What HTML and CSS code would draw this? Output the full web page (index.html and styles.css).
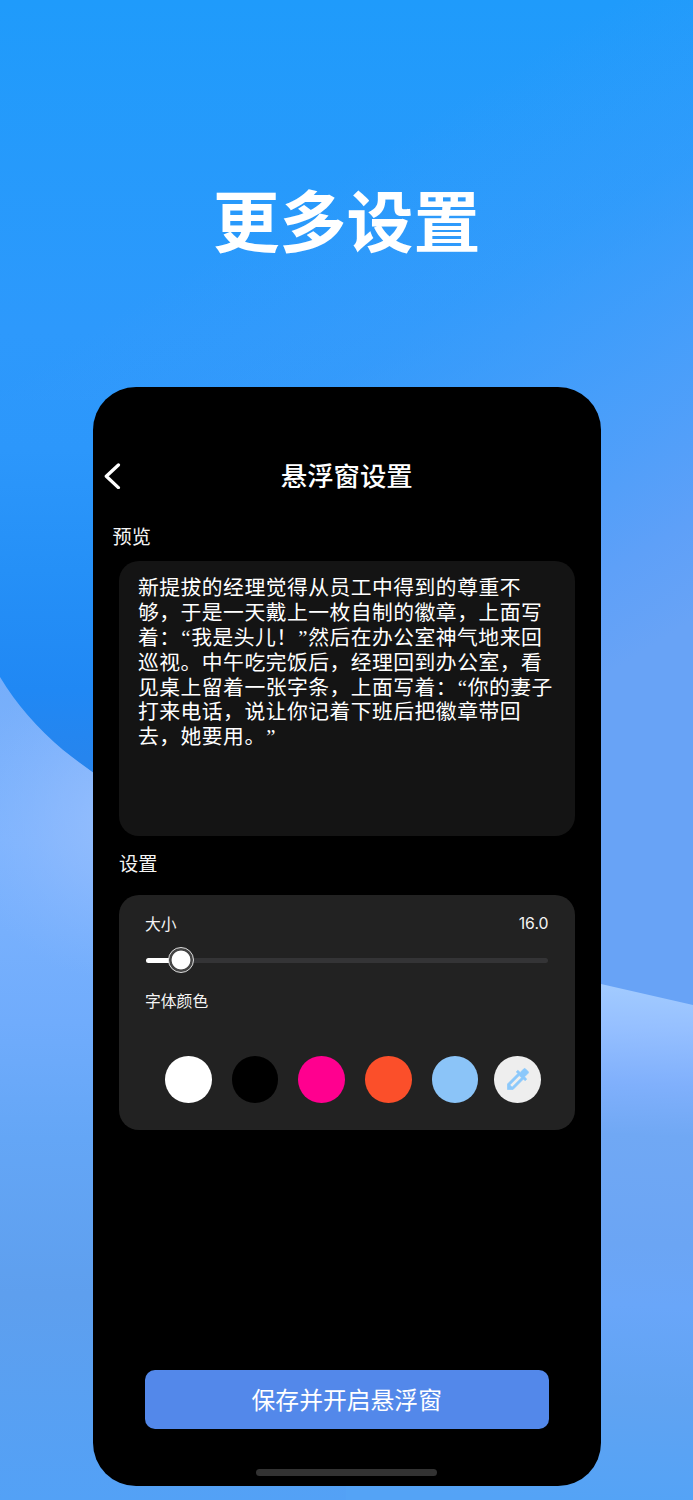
FILE: index.html
```html
<!DOCTYPE html>
<html lang="zh-CN">
<head>
<meta charset="utf-8">
<title>更多设置</title>
<link rel="stylesheet" href="styles.css">
</head>
<body>
<main class="poster">
  <svg class="backdrop" viewBox="0 0 693 1500" aria-hidden="true">
    <defs>
      <linearGradient id="sky" x1="0" y1="0" x2="0" y2="1">
        <stop offset="0" stop-color="#1f9bfb"/>
        <stop offset=".22" stop-color="#2d99fc"/>
        <stop offset=".3" stop-color="#2c97fb"/>
        <stop offset=".38" stop-color="#2590f7"/>
        <stop offset=".46" stop-color="#2088f4"/>
        <stop offset=".52" stop-color="#2884ec"/>
      </linearGradient>
      <linearGradient id="haze" gradientUnits="userSpaceOnUse" x1="330" y1="180" x2="630" y2="660">
        <stop offset="0" stop-color="#4a9ff9" stop-opacity="0"/>
        <stop offset=".3" stop-color="#459ffa" stop-opacity=".3"/>
        <stop offset=".6" stop-color="#4c9ffa" stop-opacity=".9"/>
        <stop offset=".85" stop-color="#5ea0f8"/>
        <stop offset="1" stop-color="#68a3f6"/>
      </linearGradient>
      <linearGradient id="waveLeft" gradientUnits="userSpaceOnUse" x1="0" y1="677" x2="0" y2="1500">
        <stop offset="0" stop-color="#76aefa"/>
        <stop offset=".2" stop-color="#7eb4fe"/>
        <stop offset=".42" stop-color="#70acfc"/>
        <stop offset=".56" stop-color="#64a6f6"/>
        <stop offset=".75" stop-color="#5e9fee"/>
        <stop offset="1" stop-color="#53a1f6"/>
      </linearGradient>
      <radialGradient id="glow" gradientUnits="userSpaceOnUse" cx="120" cy="820" r="160">
        <stop offset="0" stop-color="#94befd"/>
        <stop offset=".4" stop-color="#90bbfd" stop-opacity=".65"/>
        <stop offset="1" stop-color="#86b6fe" stop-opacity="0"/>
      </radialGradient>
      <linearGradient id="waveRight" gradientUnits="userSpaceOnUse" x1="610" y1="984" x2="590" y2="1500">
        <stop offset="0" stop-color="#a2cbff"/>
        <stop offset=".08" stop-color="#96c0ff"/>
        <stop offset=".19" stop-color="#80b0fc"/>
        <stop offset=".29" stop-color="#70a8f4"/>
        <stop offset=".5" stop-color="#6ba5f4"/>
        <stop offset=".62" stop-color="#69a6f9"/>
        <stop offset=".8" stop-color="#60a3f2"/>
        <stop offset="1" stop-color="#54a3f6"/>
      </linearGradient>
    </defs>
    <rect width="693" height="1500" fill="url(#sky)"/>
    <path d="M0 0H693V1100H350V400H0Z" fill="url(#haze)"/>
    <path d="M0 677Q24 717 63 750Q190 850 346 900V1500H0Z" fill="url(#waveLeft)"/>
    <path d="M0 677Q24 717 63 750Q190 850 346 900V1500H0Z" fill="url(#glow)"/>
    <path d="M346 935L601 984L693 1005V1500H346Z" fill="url(#waveRight)"/>
  </svg>

  <h1 class="headline">更多设置</h1>

  <section class="phone">
    <header class="navbar">
      <svg class="back" viewBox="0 0 18 28"><path d="M14.4 4L2.3 15.3L14.4 26.6"/></svg>
      <h2 class="nav-title">悬浮窗设置</h2>
    </header>

    <div class="label label-preview">预览</div>
    <div class="card preview">
      <p>新提拔的经理觉得从员工中得到的尊重不</p>
      <p>够，于是一天戴上一枚自制的徽章，上面写</p>
      <p>着：<q>“</q>我是头儿！<q>”</q>然后在办公室神气地来回</p>
      <p>巡视。中午吃完饭后，经理回到办公室，看</p>
      <p>见桌上留着一张字条，上面写着：<q>“</q>你的妻子</p>
      <p>打来电话，说让你记着下班后把徽章带回</p>
      <p>去，她要用。<q>”</q></p>
    </div>

    <div class="label label-settings">设置</div>
    <div class="card settings">
      <div class="row"><span>大小</span><span class="value">16.0</span></div>
      <div class="slider"><span class="fill"></span><span class="thumb"></span></div>
      <div class="row">字体颜色</div>
      <div class="swatches">
        <span class="swatch white"></span>
        <span class="swatch black"></span>
        <span class="swatch pink"></span>
        <span class="swatch orange"></span>
        <span class="swatch sky"></span>
        <span class="swatch picker">
          <svg viewBox="0 0 24 24"><path d="M20.71 5.63l-2.34-2.34c-.39-.39-1.02-.39-1.41 0l-3.12 3.12-1.93-1.91-1.41 1.41 1.42 1.42L3 16.25V21h4.75l8.92-8.92 1.42 1.42 1.41-1.41-1.92-1.92 3.12-3.12c.4-.4.4-1.03.01-1.42zM6.92 19L5 17.08l8.06-8.06 1.92 1.92L6.92 19z"/></svg>
        </span>
      </div>
    </div>

    <button class="save">保存并开启悬浮窗</button>
    <div class="home-bar"></div>
  </section>
</main>
</body>
</html>
```

FILE: styles.css
```css
* { box-sizing: border-box; }
body {
  margin: 0;
  font-family: "Noto Sans CJK SC", sans-serif;
  color: #fff;
}
.poster {
  position: relative;
  width: 693px;
  height: 1500px;
  padding-top: 168px;
  overflow: hidden;
}
.backdrop {
  position: absolute;
  inset: 0;
  width: 693px;
  height: 1500px;
  z-index: -1;
}
.headline {
  margin: 0 0 119px;
  height: 100px;
  line-height: 100px;
  font-size: 66.9px;
  font-weight: 700;
  text-align: center;
}
.phone {
  display: flex;
  flex-direction: column;
  width: 507.5px;
  height: 1099px;
  margin-left: 93px;
  padding: 68px 26px 0;
  border-radius: 43px;
  background: #000;
}
.navbar {
  display: grid;
  grid-template-columns: 18px 1fr 18px;
  align-items: center;
  height: 40px;
  margin: 0 -15px;
}
.back { width: 18px; height: 28px; }
.back path {
  fill: none;
  stroke: #fff;
  stroke-width: 3.3;
  stroke-linecap: round;
  stroke-linejoin: round;
}
.nav-title {
  margin: 0;
  font-size: 26.4px;
  font-weight: 500;
  line-height: 40px;
  text-align: center;
}
.label {
  height: 30px;
  line-height: 30px;
  font-size: 19.2px;
  color: #f4f4f4;
}
.label-preview { margin: 26px 0 10px -6.5px; }
.label-settings { margin: 12px 0 17px; }
.card { width: 455.5px; border-radius: 20px; }
.preview {
  height: 275px;
  padding: 13px 0 0 19px;
  background: #141414;
}
.preview p {
  margin: 0;
  height: 24.9px;
  line-height: 24.9px;
  font-size: 20.8px;
  letter-spacing: .48px;
  white-space: nowrap;
  text-spacing-trim: space-all;
}
.preview q {
  display: inline-block;
  width: 10.6px;
  line-height: 20px;
  font-family: "Liberation Serif", serif;
  letter-spacing: 0;
  text-align: center;
  quotes: none;
}
.settings {
  height: 235px;
  padding: 16px 26px 0;
  background: #222;
}
.row {
  display: flex;
  justify-content: space-between;
  height: 26px;
  line-height: 26px;
  font-size: 15.8px;
  color: #f4f4f4;
}
.value { font-family: Inter, sans-serif; }
.slider {
  position: relative;
  height: 5px;
  margin: 21px 1px 25px;
  border-radius: 3px;
  background: #343436;
}
.fill {
  display: block;
  width: 35px;
  height: 5px;
  border-radius: 3px;
  background: #fff;
}
.thumb {
  position: absolute;
  left: 22px;
  top: -11px;
  width: 26px;
  height: 26px;
  border: 1.8px solid #ddd;
  border-radius: 50%;
  background: radial-gradient(circle, #fff 9px, #444 9.8px);
}
.swatches {
  display: flex;
  gap: 20.1px;
  margin: 42px 0 0 20px;
}
.swatch {
  flex: none;
  width: 46.6px;
  height: 46.6px;
  border-radius: 50%;
}
.white { background: #fff; }
.black { background: #000; }
.pink { background: #ff008f; }
.orange { background: #fb4f2a; }
.sky { background: #8bc4f8; }
.picker {
  display: grid;
  place-items: center;
  margin-left: -4px;
  background: #eee;
}
.picker svg {
  width: 28px;
  height: 28px;
  fill: #8bc8fb;
  stroke: #8bc8fb;
  stroke-width: .6;
}
.save {
  width: 404px;
  height: 59px;
  margin: 240px auto 40px;
  padding: 0 0 2px;
  border: 0;
  border-radius: 10px;
  background: #5388ea;
  color: #fff;
  font: 400 23.8px/57px "Noto Sans CJK SC", sans-serif;
}
.home-bar {
  align-self: center;
  width: 181px;
  height: 7px;
  border-radius: 4px;
  background: #323232;
}
```
